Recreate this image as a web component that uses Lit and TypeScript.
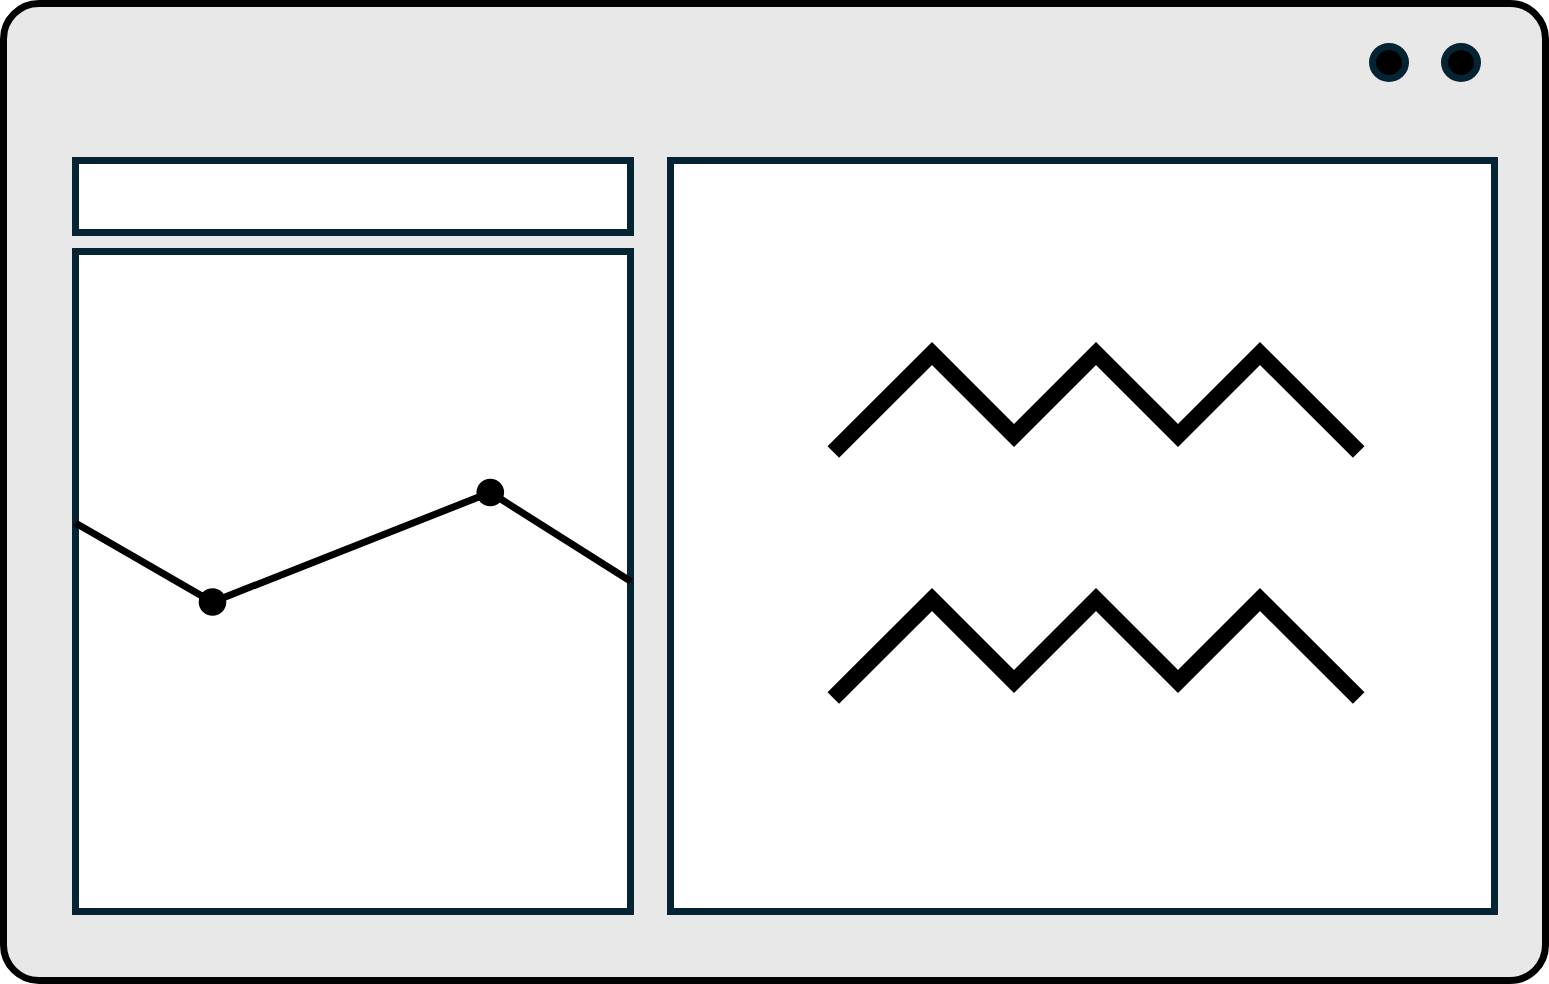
import { LitElement, css, html, svg } from "lit";
import { customElement, property } from "lit/decorators.js";

type Point = [number, number];

const toPoints = (points: Point[]) => points.map((p) => p.join(",")).join(" ");

/** Trend line that runs from one edge of its panel to the other. */
@customElement("trend-chart")
class TrendChart extends LitElement {
  @property({ attribute: false }) points: Point[] = [];

  static styles = css`
    :host {
      display: flex;
      min-width: 0;
      min-height: 0;
    }
    .chart {
      display: block;
      width: 100%;
      height: 100%;
      overflow: visible;
    }
    .line {
      fill: none;
      stroke: #000;
      stroke-width: 7;
    }
  `;

  render() {
    return html`
      <svg class="chart" viewBox="0 0 548 653" aria-hidden="true">
        <polyline class="line" points=${toPoints(this.points)}></polyline>
        ${this.points
          .slice(1, -1)
          .map(([x, y]) => svg`<circle cx=${x} cy=${y} r="13.8"></circle>`)}
      </svg>
    `;
  }
}

/** Zigzag strokes stacked one above the other. */
@customElement("wave-figure")
class WaveFigure extends LitElement {
  @property({ attribute: false }) offsets: number[] = [];

  static styles = css`
    :host {
      display: flex;
      min-width: 0;
      min-height: 0;
    }
    .figure {
      display: block;
      width: 100%;
      height: 100%;
    }
    .wave {
      fill: none;
      stroke: #000;
      stroke-width: 16.4;
      stroke-linejoin: miter;
    }
  `;

  private wave(top: number): Point[] {
    return [
      [159.3, top + 98.5],
      [258, top],
      [340, top + 82],
      [422, top],
      [504, top + 82],
      [586, top],
      [684.7, top + 98.5],
    ];
  }

  render() {
    return html`
      <svg class="figure" viewBox="0 0 817 744" aria-hidden="true">
        ${this.offsets.map(
          (top) => svg`<polyline class="wave" points=${toPoints(this.wave(top))}></polyline>`
        )}
      </svg>
    `;
  }
}

@customElement("app-root")
class AppRoot extends LitElement {
  static styles = css`
    :host {
      display: block;
      background: #fff;
      font-family: "Liberation Sans", sans-serif;
    }
    .window {
      box-sizing: border-box;
      display: flex;
      flex-direction: column;
      height: 100vh;
      border: 7px solid #000;
      border-radius: 39px;
      background: #e8e8e8;
    }
    .titlebar {
      display: flex;
      justify-content: flex-end;
      gap: 32px;
      padding: 36px 61px 75px;
    }
    .dot {
      box-sizing: border-box;
      width: 40px;
      height: 39px;
      padding: 0;
      border: 7px solid #042433;
      border-radius: 50%;
      background: #000;
    }
    .content {
      flex: 1;
      display: grid;
      grid-template-columns: minmax(0, 562fr) minmax(0, 831fr);
      gap: 33px;
      min-height: 0;
      padding: 0 44px 62px 65px;
    }
    .side {
      display: grid;
      grid-template-rows: 79px minmax(0, 1fr);
      gap: 12px;
      min-height: 0;
    }
    .panel {
      box-sizing: border-box;
      display: grid;
      grid-template: minmax(0, 1fr) / minmax(0, 1fr);
      min-height: 0;
      border: 7px solid #042433;
      background: #fff;
    }
  `;

  private trend: Point[] = [
    [-3.5, 268],
    [133.5, 347],
    [411.3, 237.5],
    [552, 326.5],
  ];

  render() {
    return html`
      <main class="window">
        <header class="titlebar">
          <button class="dot" type="button" aria-label="Minimize"></button>
          <button class="dot" type="button" aria-label="Close"></button>
        </header>
        <div class="content">
          <div class="side">
            <div class="panel"></div>
            <section class="panel">
              <trend-chart .points=${this.trend}></trend-chart>
            </section>
          </div>
          <section class="panel">
            <wave-figure .offsets=${[189.5, 435.5]}></wave-figure>
          </section>
        </div>
      </main>
    `;
  }
}
